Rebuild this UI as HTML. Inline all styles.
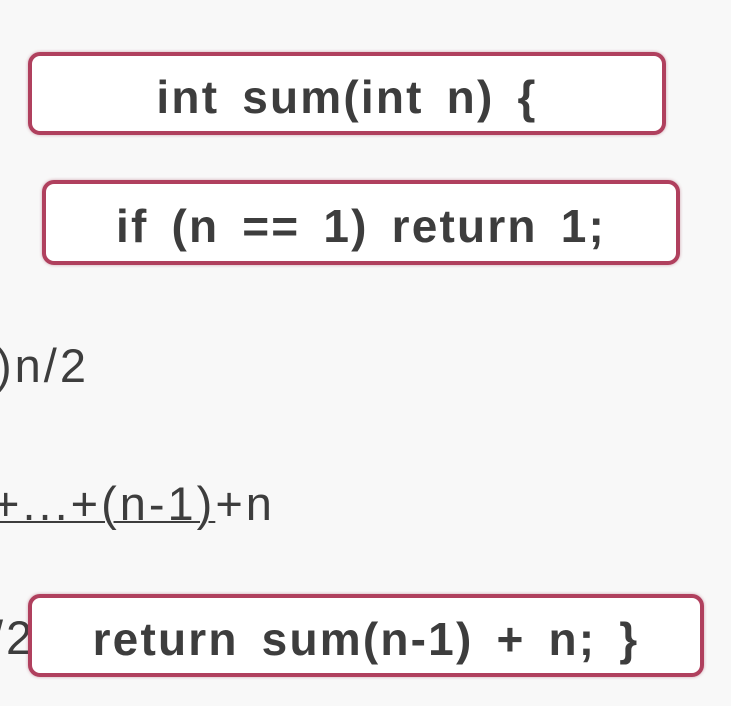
<!DOCTYPE html>
<html><head><style>
body{margin:0;width:731px;height:706px;background:#f8f8f8;position:relative;overflow:hidden;font-family:"Liberation Sans",sans-serif;color:#3d3d3d}
.b{position:absolute;box-sizing:border-box;border:4px solid #b0405e;border-radius:12px;background:#fff;font-weight:bold;font-size:46px;letter-spacing:2.2px;word-spacing:8px;display:flex;align-items:center;justify-content:center;padding-top:6px;box-shadow:0 0 3px rgba(150,40,70,.4)}
.t{position:absolute;font-size:47px;letter-spacing:3px;white-space:nowrap}
</style></head><body>
<div class="b" style="left:28px;top:52px;width:638px;height:83px">int sum(int n) {</div>
<div class="b" style="left:42px;top:180px;width:638px;height:85px">if (n == 1) return 1;</div>
<div class="t" style="left:-4px;top:338px">)n/2</div>
<div class="t" style="left:-8px;top:476px"><span style="text-decoration:underline;text-decoration-thickness:2px">+...+(n-1)</span>+n</div>
<div class="t" style="left:-10px;top:610px">/2</div>
<div class="b" style="left:28px;top:594px;width:676px;height:83px">return sum(n-1) + n; }</div>
</body></html>
